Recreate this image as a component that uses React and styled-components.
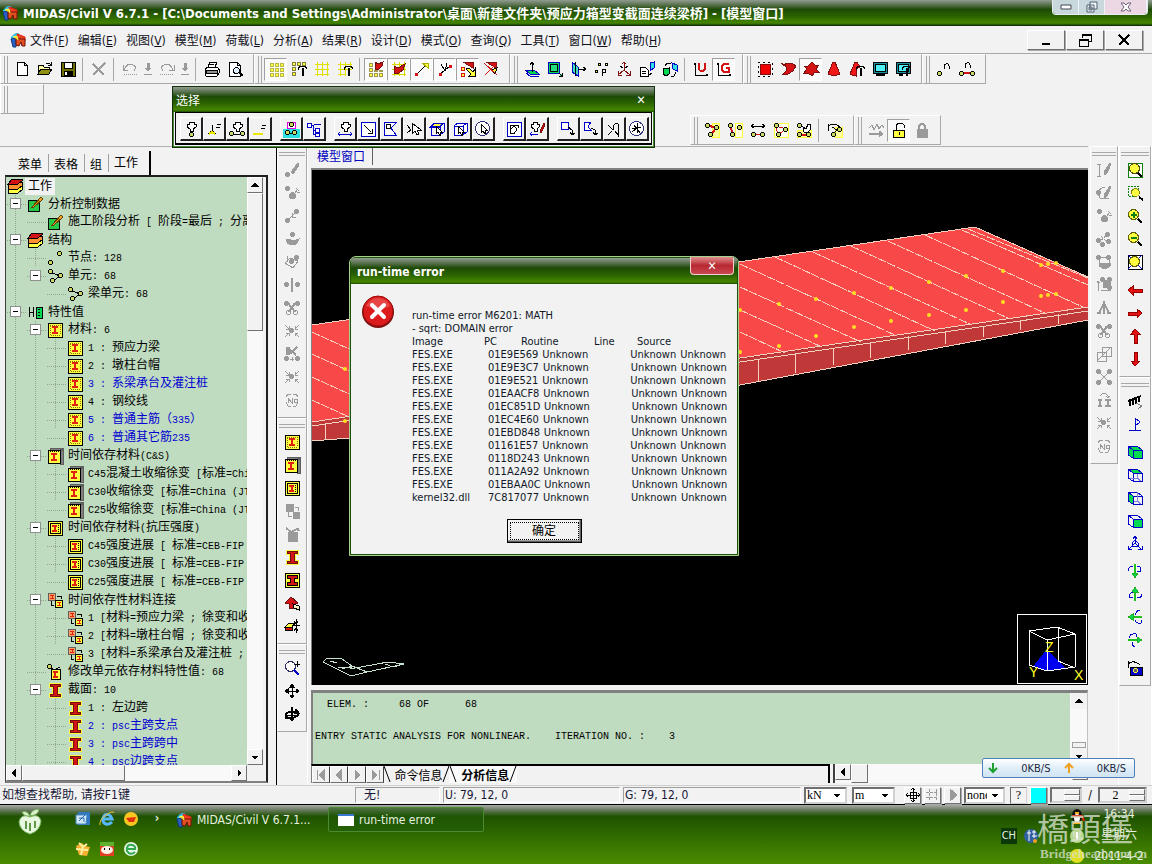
import React, { useState } from "react";
import styled, { createGlobalStyle, css } from "styled-components";

const GlobalStyle = createGlobalStyle`
  * {
    box-sizing: border-box;
  }
  body {
    margin: 0;
    background: #f2f2f2;
    font-family: "DejaVu Sans Condensed", "Noto Sans CJK SC", sans-serif;
    font-size: 12px;
    color: #000;
  }
  button,
  select,
  input {
    font: inherit;
    color: inherit;
    margin: 0;
    padding: 0;
    border: 0;
    background: none;
    border-radius: 0;
  }
`;

/* ---------- icons ---------- */

const K = "#000";
const B = "#0000c8";
const G = "#00d850";
const R = "#d41414";
const Y = "#ffff40";
const C = "#30e0e0";
const W = "#fff";
const D = "#9a9a9a";
const O = "#c8d860";

// half pixel centre keeps the small circles round on the pixel grid
const dot = (x, y, r = 2) =>
  `M${x + 0.5 - r} ${y + 0.5}a${r} ${r} 0 1 0 ${2 * r} 0a${r} ${r} 0 1 0 ${-2 * r} 0z`;
const node = (x, y) => [dot(x, y), K, O];
const gray = (x, y) => [dot(x, y, 2), D, D];

const hand = "M7 10V8L4 6V3h2V1h5v2h2v3l-3 2v2z";
const cursor = "M6 2v11l3-3 2 4 2-1-2-4h4z";
const hammer = ["M7 9V7l3-2h4l2 3M12 7v8M11 7v8", K];
const cubeLines = "M2 5l4-3h9v9l-4 3H2zM2 5h9v9M11 5l4-3";
const layers = [
  ["M1 15v-4l4-3h10v4l-4 3H1z", K, Y],
  ["M1 10V7l4-3h10v4l-4 3H1z", K, "#ff9030"],
  ["M1 6l4-5h10v2l-4 3z", K, R]
];
const beamBox = [
  ["M1 1h14v14H1z", K, Y],
  ["M3 3h10v10H3z", "#807000", null, 1, "1 1"],
  ["M5 5h6M5 11h6M8 5v6", "#e02010", null, 2]
];
const beamCreep = [
  ["M13 1h3v15h-3zM3 0h13v2H3z", "#606060", "#808080"],
  ["M1 2h12v13H1z", K, Y],
  ["M3 3h10v11", K, null, 1, "1 1"],
  ["M4 6h6M4 12h6M7 6v6", "#e02010", null, 2]
];
const beamStrength = [
  ["M1 1h14v14H1z", K, Y],
  ["M3 3h10v10H3z", K],
  ["M5 6h5M5 11h5M8 6v5", "#e02010", null, 2],
  ["M11 3v10", K, null, 1, "1 1"]
];
const section = [
  ["M2 1h12v4h-3v6h3v4H2v-4h3V5H2z", Y, R],
  ["M3 2h10v2h-3v8h3v2H3v-2h3V4H3z", "#701010", R]
];

const icons = {
  app: [
    ["M1 6q4-6 8-4l-2 6z", "#30b8e8", "#30c8f0"],
    ["M7 2l8 3v4l-7-1z", "#e02010", "#f04020"],
    ["M1 7l5-1v9H3z", "#103880", "#2860c8"],
    ["M6 7h9v7h-3l-1-4-2 4-3-1z", "#701008", "#e05020"],
    ["M3 5l4-1 1 4", Y, "#f0d020"]
  ],
  newFile: [["M3 1h7l3 3v10H3zM10 1v3h3", K, W]],
  open: [
    ["M1 13V4h5l1 2h5v2", K, "#ffffa0"],
    ["M1 13l3-5h11l-3 5z", K, "#909010"],
    ["M9 3q3-2 5 1M14 1v3h-3", K]
  ],
  save: [
    ["M1 1h14v14H1z", K, "#707000"],
    ["M4 1h8v6H4z", K, W],
    ["M4 10h8v5H4z", K, K],
    ["M6 11v3", W, null, 2]
  ],
  remove: [["M2 3l11 11M14 2L2 14", D, null, 2]],
  undo: [["M1 4v5h5M2 9q2-6 7-6 7 2 3 7", D], ["M2 13h13", D, null, 1, "1 1"]],
  redo: [["M15 4v5h-5M14 9q-2-6-7-6-7 2-3 7", D], ["M1 13h13", D, null, 1, "1 1"]],
  down: [["M7 2h2v4H7zM5 7h6l-3 3z", D, D], ["M4 13h8", D]],
  print: [
    ["M4 6l2-5h7l-2 5M1 8l3-2h9l2 2v4l-2 3H2l-1-3z", K, W],
    ["M2 9h11v3H2zM6 3h4M15 8l-2 2", K, "#909090"]
  ],
  preview: [
    ["M2 1h8l3 3v11H2zM10 1v3h3", K, W],
    [dot(9, 9, 3), K, "#e0f0ff"],
    ["M12 11l4 4", K, null, 2]
  ],
  gridDots: [["M2 2h3v3H2zM7 2h3v3H7zM12 2h3v3h-3zM2 7h3v3H2zM7 7h3v3H7zM12 7h3v3h-3zM2 12h3v3H2zM7 12h3v3H7zM12 12h3v3h-3z", "#b8b848", Y]],
  gridDotsSet: [["M1 1h3v3H1zM6 1h3v3H6zM11 1h3v3h-3zM1 6h3v3H1zM1 11h3v3H1z", "#808040", Y], hammer],
  gridLines: [["M1 3h14M1 8h14M1 13h14M3 1v14M8 1v14M13 1v14", "#e0e000", null, 1]],
  gridLinesSet: [["M1 3h14M1 8h14M1 13h8M3 1v14M8 1v14M13 1v6", "#e0e000"], hammer],
  snapGrid: [["M1 2h3v3H1zM1 7h3v3H1zM6 9h3v1H6zM1 12h3v3H1zM6 12h3v3H6zM11 12h3v3h-3zM11 9h3v1h-3z", "#a09850", Y], ["M7 8V1l3 2 5-2-1 4-4 4z", "#701010", R]],
  snapLine: [["M1 3h14M1 8h14M1 13h14M3 1v14M8 1v14M13 1v14", "#d8d800", Y], ["M3 12V5l4 2 7-4-2 6-4 3z", "#701010", R]],
  snapNode: [["M3 13l8-8", K], ["M8 2h6v5z", "#b0b000", Y], ["M1 12h2v2H1z", R, R]],
  snapElem: [["M3 13l10-8M4 3l4 7 2-8", K], ["M2 12h2v2H2zM12 4h2v2h-2z", R, R]],
  snapAll: [["M1 6h3v3H1zM1 12h3v3H1z", R, Y], ["M3 1h10v6z", "#801010", R], ["M6 8l5 5-2 2h6V8l-2 3-4-4z", K, Y]],
  snapNone: [["M3 1h10v6z", "#801010", R], ["M8 9l4 4 2-6z", K, Y], ["M1 2l13 12M14 2L2 14", R]],
  workPlane: [["M1 9h9l5 4H6z", B, G], ["M8 11V1M6 4l2-3 2 3", K], ["M2 12l4 3h9", B]],
  workXY: [["M1 1h11v11H1z", B, G], ["M3 3h7v7H3zM12 12l3 3M15 12v3h-3", K, "#20e080"]],
  workXZ: [["M2 1l6 5v9l-6-4z", B, "#40e0c0"], ["M8 8h8M13 6l3 2-3 2M5 1v14", K]],
  points: [["M5 2h2v2H5zM12 2h2v2h-2zM2 9h2v2H2z", K, Y], ["M9 8h3v3H9v4V8z", K]],
  axes: [["M8 9V1M8 9l-6 5M8 9l6 5M6 3l2-2 2 2M2 10v4h4M14 10v4h-4", "#801010"], ["M4 5l3 2M12 5L9 7", K]],
  calcSheet: [["M1 6h5l3 3v6H1zM3 10h4M3 12h4", K, W], ["M11 2l4-1v6l-4 3z", B, C], ["M10 14l3-2", K]],
  rotatePlane: [["M1 8l6-1v6l-3 2-3-2z", K, G], ["M10 2l5 2v6l-4-2z", B, C], ["M3 5l2-3h4M14 11l-2 4H9", K]],
  ucs: [["M2 2v12h13M1 4l1-2 1 2M13 13l2 1-2 1", K], ["M6 2v5q0 3 3 3t3-3V2", R, null, 2]],
  gcs: [["M2 2v12h13M1 4l1-2 1 2M13 13l2 1-2 1", K], ["M13 3H8L6 5v4l2 2h5V7h-3", R, null, 2]],
  hidden: [["M3 3h10v10H3z", "#801010", "#f00000"], ["M1 1h14v14H1z", K, null, 1, "2 3"]],
  shrink: [["M1 2l4 2V2h7l4 3-3 5-5 3H3l3-3V6z", "#801010", R]],
  perspective: [["M1 5h4l4-4 3 3h4l-3 4 3 3h-4l-3 4-4-3H1l3-4z", "#801010", R]],
  render: [["M8 1h1l5 12q-6 3-12 0L7 1z", "#801010", "#f01818"]],
  renderSet: [["M7 1h1l3 5-4 2v7q-3 0-6-2L6 1z", "#801010", "#f01818"], hammer],
  display: [["M1 1h14v11H1z", K, "#1890a0"], ["M3 3h10v7H3z", K, "#50f0f8"], ["M4 14h9", K, null, 2]],
  displaySet: [["M1 1h14v11H1z", K, "#1890a0"], ["M3 3h10v7H3z", K, "#50f0f8"], ["M4 14h4", K, null, 2], hammer],
  nodeNo: [node(3, 12), ["M8 3v5M8 4q4-3 5 1v3", K]],
  elemNo: [["M3 12h10", R, null, 2], node(2, 12), node(13, 12), ["M6 2v5M6 3q4-3 5 1v3", K]],
  selSingle: [[hand, K, W], node(8, 13)],
  selNew: [["M2 13l4-3v-6M6 10l4 3", K], ["M3 13l3-2 3 2", "#e8e800", null, 2], ["M11 3h4M10 6h4", K]],
  selElem: [[hand, K, W], ["M3 13h10", K], node(2, 12), node(13, 12)],
  selLine: [["M1 13h10", "#e8e800", null, 2], ["M10 4h4M9 7h4", K]],
  selGroup: [["M0 8h16v8H0z", C, C], ["M4 1h8v6H4z", "#e000e0", W], node(8, 3), node(4, 11), node(11, 11), ["M6 12h4", K]],
  selTree: [["M1 2h4v4H1zM9 7h4v4H9zM9 12h4v3H9z", B, W], ["M5 4h2v9h2M7 9h2M8 3h7", B]],
  selIdentity: [[hand, K, W], ["M1 13h14M3 11l-2 2 2 2M13 11l2 2-2 2", B]],
  selWindow: [["M1 1h14v14H1z", B, W], ["M4 4l7 7M12 8v4H8", K]],
  selPolygon: [["M14 1H1v13h12l-5-7z", B, W], ["M3 3h4v4H3z", K]],
  selCross: [[cursor, K, W], ["M1 4l4 5M1 12l4-3", K]],
  selPlane: [["M1 6l5-4h9l-4 4z", B, Y], [cubeLines, B], ["M7 5v8l2-2 2 4 1-1-1-3h2z", K, W]],
  selVolume: [[cubeLines, B, W], ["M6 5v8l2-2 2 4 1-1-1-3h2z", K, W]],
  selPointer: [[dot(7, 7, 7), "#303080", W], ["M6 3v9l2-2 2 3 1-1-1-3h2z", K, W]],
  selPrev: [["M1 1h14v14H1z", B, W], ["M4 5v7h5M4 12q1-7 5-6 4 3-1 6M4 4h8v3", K]],
  selRecent: [["M5 10V8L2 6V3h2V1h4v2h2v3L8 8v2z", K, W], ["M15 2l-4 8 1 2 4-8z", "#801010", R], ["M1 13h8M3 11l-2 2 2 2", B]],
  unWindow: [["M1 1h7v7H1z", B, W], ["M8 6l4 3v5M10 11l2 3 3-2", K]],
  unPolygon: [["M8 1H1v8h7L5 6z", B, W], ["M8 7l4 2v5M10 11l2 3 3-2", K]],
  unCross: [["M7 9V5l3-3 2 1v11l-3-4M2 4l5 5M2 14l4-4", K]],
  unAll: [[dot(7, 7, 7), "#303080", W], ["M8 2v10M3 8l9-2M5 4l6 8M3 11l4-3", K]],
  actNode: [["M8 1h7v14H8z", Y, "#ffffa0"], ["M3 3l9 3-5 7", R, null, 2], node(3, 3), node(6, 12), node(12, 5)],
  actElem: [["M8 1h7v14H8z", Y, "#ffffe0"], ["M4 3l1 9", R, null, 2], node(3, 3), node(5, 12), node(12, 5)],
  actSwap: [["M1 4h14M4 2L1 4l3 2M12 2l3 2-3 2", K], ["M4 12h8", R], node(3, 12), node(12, 12)],
  actTri: [["M1 1h14v14H1z", Y, "#fffff0"], ["M3 4l10 3-8 6z", R], node(3, 3), node(12, 7), node(5, 12)],
  actHand: [["M1 8h14v7H1z", Y, "#ffffa0"], ["M8 10L7 5l3 2 2-5h2v6l-3 3z", K, W], ["M4 13h7", R, null, 2], node(3, 3), node(3, 12), node(12, 12)],
  actUndo: [["M8 5h7v10H8z", Y, "#ffffa0"], ["M1 2v7M1 5q5-6 12 0M5 5l5 3-5 5", K], node(12, 7), node(6, 12)],
  modal: [["M1 6l3-3 2 5 3-6 2 5 3-4 2 3", D], ["M1 12h12", D, null, 2], ["M11 9l4 3-4 3z", D, D]],
  unlock: [["M2 8h11v7H2z", K, Y], ["M5 8V4l2-3h4l2 2v3M8 10v3", K]],
  lock: [["M3 7h10v8H3z", D, D], ["M5 7V4l2-2h2l2 2v3", D, null, 2]],
  layers,
  pencil: [["M1 4h11v11H1z", K, "#28c848"], ["M5 11L14 1l2 2-9 8-3 1z", "#604000", "#f0a020"]],
  nodes: [node(3, 12), node(12, 3)],
  elems: [["M3 4l10 4-7 5", K], node(3, 3), node(13, 7), node(5, 12)],
  props: [["M2 3v10M6 3v10M2 8h4", K], ["M9 3h6v11H9z", K, G], ["M11 5h2M11 8h2M11 11h2", K]],
  beamBox,
  beamCreep,
  beamStrength,
  beamLink: [["M1 1h7v7H1z", "#606060", "#ffa060"], ["M8 8h7v7H8z", K, Y], ["M10 4h4v3M4 9v4h3", K], ["M3 3h4M3 6h4M5 3v3M10 10h4M10 13h4M12 10v3", "#e02010"]],
  modify: [["M4 5h9v10H4z", K, Y], ["M2 2l5 4 6-3", K], node(2, 2), ["M6 8h5M6 13h5M8 8v5", "#e02010", null, 2]],
  section,
  gNode: [["M14 1l-7 9 2 2 6-9z", D, D], gray(3, 12)],
  gBomb: [[dot(8, 10, 3), D, D], gray(3, 3), ["M11 8l3-4M12 3l3 3M13 7h3", D]],
  gMove: [["M3 13L13 3M8 5v4h4", D], gray(3, 12), gray(12, 3)],
  gTurn: [["M2 8q1 6 6 6t7-6l-3 1M2 8h5q-1 3 4 2", D, D], gray(8, 3)],
  gProject: [["M1 9l5-5 8 3-5 7zM3 2v6M6 9l6-6", D], gray(7, 7), gray(12, 3)],
  gMirror: [["M8 1v14", D, null, 2], gray(2, 7), gray(13, 7)],
  gCut: [["M4 3l7 9M11 3l-6 9", D, null, 2], [dot(4, 12), D], [dot(11, 12), D], gray(2, 3), gray(13, 3)],
  gMerge: [["M1 2l4 4M15 2l-4 4M1 14l4-4M15 14l-4-4M5 3v3H2M11 3v3h3M5 13v-3H2M11 13v-3h3", D], gray(7, 7)],
  gCompact: [["M3 1v7h2V1M13 1L6 8M5 3l7 6", D, null, 2], gray(2, 12), gray(13, 12), ["M6 13h4M8 11v4", D]],
  gRenum: [["M2 5l2-3h3M14 5l-2-3H9M2 10l2 4h3M14 10l-2 4H9M4 11V6l4 5V6M10 7h3v3h-3z", D]],
  gLine: [["M3 2v12M1 2h4M1 14h4", D], ["M14 1l-6 9v3l3-2 4-9z", D, D]],
  gPen: [["M14 1l-6 9v3l3-2 4-9z", D, D], ["M2 7q4-6 7-4M2 8l2 5h9", D], gray(2, 7)],
  gDiv: [["M2 12L12 3M5 5l7 7", D, null, 1, "3 1"], gray(2, 9), gray(11, 3), gray(12, 10), gray(6, 13)],
  gBox: [["M3 3h10v6M3 3v10", D], ["M3 9h11v3l-3 2H6l-3-3z", D, D], gray(2, 3), gray(12, 3)],
  gScale: [["M7 3h7v7H7z", D, D], ["M2 14V4M1 6l1-2 2 2M5 13h10", D], gray(6, 2), gray(13, 2), gray(13, 10)],
  gTri: [["M8 1v13M8 3L3 13M8 3l5 10M1 13h4M11 13h4", D, null, 2]],
  gSplit: [["M1 6h9v9H1zM6 1h9v9H6zM1 15L15 1", D]],
  gCross: [["M3 3l10 10M13 3L3 13", D], gray(2, 2), gray(13, 2), gray(2, 13), gray(13, 13)],
  gParam: [["M2 8h4M2 14h4M4 8v6M9 8h6M9 14h6M12 8v6", D, null, 2], ["M4 4q4-5 8 0v2M10 4l2 2 2-2", D]],
  gLink: [["M2 1h7v7H2z", D, D], ["M9 9h6v6H9z", D, D], ["M11 4h3v4M4 9v4h4", D]],
  gModify: [["M4 6h9v9H4z", D, D], ["M2 2l5 4 6-3M13 2l2 3", D, null, 2]],
  sectionBox: [["M1 1h14v14H1z", K, Y], ["M3 3h10v3h-3v4h3v3H3v-3h3V6H3z", K, R]],
  house: [["M1 8l6-6 7 6-3 1v4H5V9z", "#701010", R], ["M9 9l6 2v4l-5-2z", K, "#fff0c0"]],
  thick: [["M1 9l4-4h6L8 9z", K, Y], ["M1 9h7v3H1z", K, R], ["M12 1v14M9 7h7M10 3l2 3 2-3M10 13l2-3 2 3", K]],
  zoomDyn: [[dot(6, 6, 5), "#303060", W], ["M10 10l5 5", B, null, 2], ["M11 4h5M13 1v6", K]],
  pan: [["M8 1v14M1 8h14", K, null, 1], ["M6 4l2-3 2 3zM6 12l2 3 2-3zM4 6L1 8l3 2zM12 6l3 2-3 2z", K, K]],
  orbit: [["M2 9q0-3 6-3t6 2q0 2-4 3", K, null, 2], ["M8 1v10", K, null, 2], ["M8 15l-3-4h6zM1 7v5h4zM12 3l3 4h-4z", K, K], ["M4 9h7", K]],
  zoomFit: [["M1 1h14v14H1z", "#108010", W], [dot(7, 6, 5), "#505000", Y], ["M11 11l4 4", K, null, 2]],
  zoomWin: [["M1 1h10v10H1z", "#108010", null, 1, "2 1"], [dot(8, 7, 4), "#808000", Y], ["M12 12l4 3", K, null, 2]],
  zoomIn: [[dot(6, 6, 5), "#606000", Y], ["M11 11l4 4", K, null, 2], ["M4 7h6M7 4v6", "#108010", null, 2]],
  zoomOut: [[dot(6, 6, 5), "#606000", Y], ["M11 11l4 4", K, null, 2], ["M4 7h6", "#108010", null, 2]],
  zoomAuto: [["M1 1h14v14H1z", K, W], ["M1 1l14 14M15 1L1 15", B], [dot(7, 7, 5), "#606000", Y]],
  left: [["M1 8l5-4v3h9v3H6v3z", "#900000", "#e81010"]],
  right: [["M15 8l-5-4v3H1v3h9v3z", "#900000", "#e81010"]],
  up: [["M8 1L4 6h3v9h3V6h3z", "#900000", "#e81010"]],
  dn: [["M8 15l-4-5h3V1h3v9h3z", "#900000", "#e81010"]],
  iso: [["M1 8l13-5M3 8v5M6 7v5M9 6v5M12 5v4", K, null, 2], ["M9 10l6 3-4 3", "#808080"]],
  flag: [["M8 14V2l5 4-5 4M2 14h12", B, null, 1]],
  cubeAll: [["M1 3h9l5 4v8H6l-5-3z", B, G], ["M1 3l5 4h9M6 7v8", B]],
  cubeTop: [["M1 3h9l5 4H6z", B, G], ["M1 3v9l5 3h9V7M6 7v8", B], ["M10 8v4H3M10 12l4 3", "#8080e0"]],
  cubeLeft: [["M1 3l5 4v8l-5-3z", B, G], ["M1 3h9l5 4v8H6M6 7h9", B], ["M10 3v9l4 3M10 12H7", "#8080e0"]],
  cubeFront: [["M6 7h9v8H6z", B, G], ["M1 3h9l5 4M1 3v9l5 3M1 3l5 4", B]],
  viewAxes: [["M8 8V1M8 8l-6 6M8 8l6 6M6 4l2-3 2 3M1 11v3h4M15 11v3h-4M5 8l3-3 3 3v3H5z", B]],
  rotDown: [["M8 1v10", "#20c020", null, 2], ["M5 10l3 5 3-5z", "#20b020", G], ["M1 8q0-5 5-4M10 3q6 1 3 6l-3-1", B]],
  rotUp: [["M8 15V5", "#20c020", null, 2], ["M5 6l3-5 3 5z", "#20b020", G], ["M6 6q-5 2-3 6l3-1M10 12q5 0 5-4", B]],
  rotLeft: [["M15 8H5", "#20c020", null, 2], ["M6 5L1 8l5 3z", "#20b020", G], ["M13 1q-5 1-4 5M8 11q1 4 6 3v-3", B]],
  rotRight: [["M1 8h10", "#20c020", null, 2], ["M10 5l5 3-5 3z", "#20b020", G], ["M2 6q1-5 7-4v3M5 10q0 4 3 5", B]],
  camera: [["M1 1v7M1 4q6-5 12 1", K], ["M3 7h12v8H3z", K, B], [dot(8, 10, 2), Y, "#606060"]],
  fast: [["M8 1v14M1 8h14M5 5h6v6H5zM6 3l2-2 2 2M6 13l2 2 2-2M3 6L1 8l2 2M13 6l2 2-2 2", K, "#f2f2f2"]],
  slow: [["M4 2v12M1 5h12M1 10h12M11 2v12", D, null, 1, "3 1"]],
  play: [["M5 2l7 6-7 6z", D, D]],
  triUp: [["M5 9l3-3 3 3z", K, K]],
  triDown: [["M5 7h6l-3 3z", K, K]],
  triLeft: [["M9 5v6L6 8z", K, K]],
  triRight: [["M7 5v6l3-3z", K, K]],
  first: [["M4 3v10M11 3v10L6 8z", D, D]],
  prev: [["M10 3v10L5 8z", D, D]],
  next: [["M6 3v10l5-5z", D, D]],
  last: [["M12 3v10M5 3v10l5-5z", D, D]],
  minimize: [["M4 12h8", K, null, 2]],
  restore: [["M5 2h9v7h-2M5 2v4M5 3h9M2 7h9v7H2zM2 8h9", K]],
  close: [["M3 3l10 10M13 3L3 13", K, null, 2]]
};

const Svg = styled.svg`
  display: block;
  flex: none;
  width: 16px;
  height: 16px;
  overflow: visible;
`;

const Icon = ({ name, smooth }) => (
  <Svg viewBox="0 0 16 16" shapeRendering={smooth ? "auto" : "crispEdges"} aria-hidden="true">
    {icons[name].map(([d, stroke, fill, width, dash], i) => (
      <path
        key={i}
        d={d}
        stroke={stroke}
        fill={fill || "none"}
        strokeWidth={width || 1}
        strokeDasharray={dash}
      />
    ))}
  </Svg>
);

/* ---------- frame ---------- */

const Screen = styled.div`
  position: relative;
  display: flex;
  flex-direction: column;
  height: 100vh;
  overflow: hidden;
  white-space: nowrap;
`;

const greenBar = css`
  background: linear-gradient(#909c90 0, #58704c 20%, #1d4a06 38%, #2b6300 65%, #458600 92%, #1d4a06 100%);
  color: #fff;
`;

const TitleBar = styled.header`
  ${greenBar}
  display: flex;
  align-items: center;
  gap: 5px;
  height: 26px;
  flex: none;
  padding-left: 2px;
  font-size: 13px;
  font-weight: bold;
  border-bottom: 1px solid #12300a;
`;

const WindowButtons = styled.div`
  position: absolute;
  top: 0;
  right: 4px;
  display: flex;
  border: 1px solid #e8eef0;
  border-top: 0;
  border-radius: 0 0 4px 4px;
  overflow: hidden;
`;

const WindowButton = styled.button`
  display: flex;
  align-items: center;
  justify-content: center;
  width: ${p => (p.$close ? 42 : 26)}px;
  height: 14px;
  background: ${p => (p.$close ? "#ecd8e4" : "#c8d8dc")};
  border-right: 1px solid #eef4f6;
`;

const MenuBar = styled.nav`
  display: flex;
  align-items: center;
  height: 28px;
  flex: none;
  padding: 0 9px 0 10px;
  border-bottom: 1px solid #a8a8a8;
`;

const MenuItem = styled.button`
  padding: 0 5px 0 4px;
  color: #101020;
  u {
    text-underline-offset: 1px;
  }
`;

const MdiButtons = styled.div`
  display: flex;
  gap: 1px;
  margin-left: auto;
`;

const raised = css`
  border: 1px solid;
  border-color: #fff #707070 #707070 #fff;
  box-shadow: 1px 1px 0 #a8a8a8;
  background: #f2f2f2;
`;

const MdiButton = styled.button`
  ${raised}
  display: flex;
  align-items: center;
  justify-content: center;
  width: 38px;
  height: 20px;
`;

const Toolbars = styled.div`
  display: flex;
  flex: none;
  height: 30px;
`;

const Bar = styled.div`
  display: flex;
  align-items: center;
  height: 30px;
  padding-right: 7px;
  border: 1px solid #a8a8a8;
  border-left-color: #fff;
  border-top-color: #fff;
`;

const Grip = styled.span`
  width: 4px;
  height: 27px;
  margin: 0 2px 0 3px;
  border: 1px solid #a8a8a8;
  border-width: 0 1px;
`;

const Sep = styled.span`
  width: 1px;
  height: 23px;
  margin: 0 4px 0 3px;
  background: #a8a8a8;
`;

const Tool = styled.button`
  display: flex;
  align-items: center;
  justify-content: center;
  width: ${p => (p.$narrow ? 14 : 23)}px;
  height: 23px;
  border: 1px solid transparent;
  ${p =>
    p.$pressed &&
    css`
      background: #fafafa;
      border-color: #a0a0a0 #fff #fff #a0a0a0;
    `}
`;

const SecondRow = styled.div`
  display: flex;
  flex: none;
  align-items: flex-start;
  height: 62px;
`;

const EmptyBar = styled(Bar)`
  width: 44px;
  align-self: flex-start;
`;

const LowerBars = styled.div`
  display: flex;
  margin: 31px 0 0 646px;
`;

const Workspace = styled.div`
  display: flex;
  flex: 1;
  min-height: 0;
`;

/* ---------- work tree ---------- */

const SidePanel = styled.aside`
  display: flex;
  flex-direction: column;
  width: 277px;
  flex: none;
  padding: 4px 8px 2px 5px;
  border-top: 1px solid #b0b0b0;
  border-right: 1px solid #000;
`;

const Tabs = styled.div`
  display: flex;
  align-items: center;
  height: 24px;
  padding-left: 8px;
`;

const Tab = styled.button`
  height: ${p => (p.$active ? 24 : 18)}px;
  padding: ${p => (p.$active ? "0 11px 4px 5px" : "0 6px 0 5px")};
  border-right: ${p => (p.$active ? "2px solid #000" : "1px solid #a0a0a0")};
`;

const TreeFrame = styled.div`
  display: grid;
  grid-template-columns: minmax(0, 1fr) 16px;
  grid-template-rows: minmax(0, 1fr) 16px;
  flex: 1;
  min-height: 0;
  border: 2px solid #000;
  border-left-width: 1px;
  border-color: #202020 #202020 #808080 #404040;
  padding-right: 3px;
`;

const Tree = styled.ul`
  margin: 0;
  padding: 0 0 0 1px;
  list-style: none;
  overflow: hidden;
  background: #c0dcc0;
`;

const Row = styled.li`
  display: flex;
  align-items: center;
  height: 18px;
  color: ${p => (p.$blue ? "#0000d0" : "#000")};
`;

const Guide = styled.span`
  align-self: stretch;
  flex: none;
  width: 20px;
  background-image: ${p =>
    [
      p.$line && "linear-gradient(#90a890 50%, transparent 0)",
      p.$branch && "linear-gradient(90deg, #90a890 50%, transparent 0)"
    ]
      .filter(Boolean)
      .join(",") || "none"};
  background-size: ${p => [p.$line && "1px 2px", p.$branch && "2px 1px"].filter(Boolean).join(",")};
  background-position: ${p => [p.$line && "8px 0", p.$branch && "8px 9px"].filter(Boolean).join(",")};
  background-repeat: ${p => [p.$line && "repeat-y", p.$branch && "repeat-x"].filter(Boolean).join(",")};
`;

const Toggle = styled.button`
  display: flex;
  align-items: center;
  justify-content: center;
  width: 11px;
  height: 11px;
  margin: 3px 0 0 3px;
  border: 1px solid #909090;
  background: #fff;
  &::before {
    content: "";
    width: 5px;
    height: 1px;
    background: #000;
  }
`;

const Label = styled.span`
  display: flex;
  align-items: baseline;
  margin-left: 2px;
  padding: 0 3px;
  line-height: 17px;
  white-space: pre;
  background: ${p => (p.$active ? "#f2f2f2" : "none")};
`;

const Mono = styled.span`
  font-family: "Liberation Mono", monospace;
  font-size: 10px;
`;

const treeRows = [
  [0, "layers", "工作"],
  [1, "pencil", "分析控制数据"],
  [2, "pencil", "施工阶段分析 [ 阶段=最后 ; 分离"],
  [1, "layers", "结构"],
  [2, "nodes", "节点: 128"],
  [2, "elems", "单元: 68"],
  [3, "elems", "梁单元: 68"],
  [1, "props", "特性值"],
  [2, "beamBox", "材料: 6"],
  [3, "beamBox", "1 : 预应力梁"],
  [3, "beamBox", "2 : 墩柱台帽"],
  [3, "beamBox", "3 : 系梁承台及灌注桩", true],
  [3, "beamBox", "4 : 钢绞线"],
  [3, "beamBox", "5 : 普通主筋（335）", true],
  [3, "beamBox", "6 : 普通其它筋235", true],
  [2, "beamCreep", "时间依存材料(C&S)"],
  [3, "beamCreep", "C45混凝土收缩徐变 [标准=China"],
  [3, "beamCreep", "C30收缩徐变 [标准=China (JTG"],
  [3, "beamCreep", "C25收缩徐变 [标准=China (JTG"],
  [2, "beamStrength", "时间依存材料(抗压强度)"],
  [3, "beamStrength", "C45强度进展 [ 标准=CEB-FIP"],
  [3, "beamStrength", "C30强度进展 [ 标准=CEB-FIP"],
  [3, "beamStrength", "C25强度进展 [ 标准=CEB-FIP"],
  [2, "beamLink", "时间依存性材料连接"],
  [3, "beamLink", "1 [材料=预应力梁 ; 徐变和收"],
  [3, "beamLink", "2 [材料=墩柱台帽 ; 徐变和收"],
  [3, "beamLink", "3 [材料=系梁承台及灌注桩 ;"],
  [2, "modify", "修改单元依存材料特性值: 68"],
  [2, "section", "截面: 10"],
  [3, "section", "1 : 左边跨"],
  [3, "section", "2 : psc主跨支点", true],
  [3, "section", "3 : psc主跨跨中", true],
  [3, "section", "4 : psc边跨支点", true]
];

// does a later row at this level hang off the same parent?
const continues = (index, level) => {
  for (let i = index + 1; i < treeRows.length; i++) {
    if (treeRows[i][0] === level) return true;
    if (treeRows[i][0] < level) return false;
  }
  return true;
};

const TreeRow = ({ index }) => {
  const [level, icon, text, blue] = treeRows[index];
  const next = treeRows[index + 1];
  const open = level > 0 && next && next[0] > level;
  const slots = [];
  for (let l = 1; l <= level; l++) {
    slots.push(
      <Guide key={l} $line={continues(index, l)} $branch={l === level}>
        {l === level && open && <Toggle aria-label={`折叠 ${text}`} />}
      </Guide>
    );
  }
  return (
    <Row $blue={blue}>
      {slots}
      <Icon name={icon} />
      <Label $active={level === 0}>
        {text.split(/([\x20-\x7e]+)/).map((part, i) => (i % 2 ? <Mono key={i}>{part}</Mono> : part))}
      </Label>
    </Row>
  );
};

const ScrollBar = styled.div`
  display: flex;
  flex-direction: ${p => (p.$vertical ? "column" : "row")};
  min-width: 0;
  min-height: 0;
  background: #f9f9f9;
`;

const ScrollButton = styled.button`
  ${raised}
  display: flex;
  align-items: center;
  justify-content: center;
  flex: none;
  width: 16px;
  height: 16px;
  box-shadow: none;
`;

const Thumb = styled.div`
  ${raised}
  box-shadow: none;
  flex: 0 0 ${p => p.$size};
`;

const Space = styled.span`
  flex: 1;
`;

/* ---------- vertical toolbars ---------- */

const SideBars = styled.div`
  flex: none;
  width: ${p => p.$width}px;
  border-right: 1px solid #fff;
`;

const SideBar = styled.div`
  display: flex;
  flex-direction: column;
  align-items: center;
  padding-bottom: 6px;
  border: 1px solid #a8a8a8;
  border-left-color: #fff;
  border-top-color: #fff;
`;

const SideGrip = styled.span`
  align-self: stretch;
  height: 4px;
  margin: 5px 1px 2px;
  border: 1px solid #a8a8a8;
  border-width: 1px 0;
`;

const Gap = styled.span`
  height: ${p => p.$h}px;
`;

const SideTools = ({ items }) => (
  <SideBar>
    <SideGrip />
    {items.map((name, i) =>
      typeof name === "number" ? (
        <Gap key={i} $h={name} />
      ) : (
        <Tool key={i} aria-label={name}>
          <Icon name={name} />
        </Tool>
      )
    )}
  </SideBar>
);

const leftBars = [
  ["gNode", "gBomb", "gMove", "gTurn", "gProject", "gMirror", "gCut", "gMerge", "gCompact", "gMerge", "gRenum"],
  ["beamBox", "beamCreep", "beamStrength", "gLink", "gModify", "section", "sectionBox", "house", "thick"],
  ["zoomDyn", "pan", "orbit"]
];
const editBar = ["gLine", "gPen", "gBomb", "gDiv", "gBox", "gScale", "gTri", "gCut", "gSplit", "gCross", "gParam", "gMerge", "gRenum"];
const viewBars = [
  ["zoomFit", "zoomWin", "zoomIn", "zoomOut", "zoomAuto", 5, "left", "right", "up", "dn"],
  ["iso", "flag", 4, "cubeAll", "cubeTop", "cubeLeft", "cubeFront", "viewAxes", 5, "rotDown", "rotUp", "rotLeft", "rotRight", 5, "camera"]
];

/* ---------- model window ---------- */

const Center = styled.main`
  display: flex;
  flex-direction: column;
  flex: 1;
  min-width: 0;
  padding: 0 2px 2px 3px;
`;

const WindowTabs = styled.div`
  display: flex;
  height: 22px;
  flex: none;
  border-top: 1px solid #b0b0b0;
`;

const WindowTab = styled.button`
  height: 18px;
  padding: 0 7px 3px 6px;
  color: #0000c0;
  border-right: 1px solid #606060;
`;

const View = styled.div`
  flex: 1;
  min-height: 0;
  border: 2px solid #808080;
  border-left-width: 1px;
  border-right: 0;
  border-bottom: 0;
  background: #000;
  overflow: hidden;
  svg {
    display: block;
    width: 100%;
    height: 100%;
  }
`;

const deckLines = [
  "M925 235L1085 308", "M888 241L1047 314", "M851 246L1010 319", "M813 252L972 325",
  "M775 257L935 331", "M740 264L897 336", "M740 287L861 342", "M740 310L822 347", "M740 332L785 353",
  "M962 230L1088 285", "M968 229L1088 278",
  "M312 332L349 349", "M312 354L349 371", "M312 377L349 394", "M312 400L349 417"
];
const sideLines = [
  [758, 360, 381], [795, 354, 373], [833, 348, 365], [870, 342, 358], [908, 336, 350],
  [945, 331, 344], [983, 326, 337], [1020, 320, 330], [1058, 314, 324], [325, 424, 440]
];
const deckDots = [
  [740, 310], [779, 304], [816, 299], [854, 293], [891, 288], [929, 282], [966, 276], [1003, 271], [1041, 265], [1048, 264], [1056, 263],
  [740, 352], [779, 346], [816, 336], [854, 327], [891, 321], [929, 315], [966, 310], [1003, 302], [1041, 296], [1048, 295], [1056, 294],
  [345, 369], [345, 421]
];

const Model = () => (
  <svg viewBox="312 170 776 515" preserveAspectRatio="xMaxYMax meet" role="img" aria-label="模型">
    <path d="M312 325L975 227 1088 277V307L312 422z" fill="#f84848" />
    <path d="M312 422L1088 307V320L740 385 349 438 312 441z" fill="#c03838" />
    <g stroke="#f4d0c0" fill="none" shapeRendering="crispEdges">
      <path d="M312 325L975 227 1088 277M312 422L740 358 1088 307M312 426L740 362 1088 311M312 441L349 438 740 385 1088 320" />
      {deckLines.map(d => (
        <path key={d} d={d} strokeDasharray="9 1" />
      ))}
      {sideLines.map(([x, y1, y2]) => (
        <path key={x} d={`M${x} ${y1}V${y2}`} />
      ))}
    </g>
    {deckDots.map(([x, y]) => (
      <circle key={`${x}-${y}`} cx={x} cy={y} r="2" fill="#ffe020" />
    ))}
    <g stroke="#c8e0d0" fill="none" shapeRendering="crispEdges">
      <path d="M323 662L327 658 342 659 352 666 367 672 404 664 388 662 350 669M323 662L351 676 367 672M330 661L337 663M338 667h14M385 664l8 3 11-3M352 666l-10 3" />
    </g>
    <g fill="none" stroke="#fff" shapeRendering="crispEdges">
      <path d="M1017.5 614.5h69v69h-69z" />
      <path d="M1047 650l-13 16 13 5 18-3z" fill="#0000f0" stroke="#0000f0" />
      <path d="M1029 631l28-4 18 7-28 6zM1029 631v34l18 6 28-4v-33M1047 640v31M1058 627v34l17 7" />
    </g>
    <g fill="#ffff20" fontFamily="Liberation Sans, sans-serif" fontSize="14">
      <text x="1045" y="652">Z</text>
      <text x="1029" y="677">Y</text>
      <text x="1074" y="680">X</text>
    </g>
  </svg>
);

const Output = styled.section`
  flex: none;
  display: grid;
  grid-template-columns: minmax(0, 1fr) 17px;
  margin-top: 5px;
  border-top: 3px solid #808080;
  border-left: 2px solid #808080;
  border-right: 1px solid #c0c0c0;
`;

const Log = styled.pre`
  margin: 0;
  height: 71px;
  padding: 4px 2px;
  background: #c0dcc0;
  font-family: "Liberation Mono", monospace;
  font-size: 10px;
  line-height: 16px;
`;

const LogScroll = styled(ScrollBar)`
  align-items: center;
  button {
    border-color: transparent;
  }
`;

const SmallThumb = styled.div`
  width: 14px;
  height: 6px;
  border: 1px solid #a0a0a0;
  background: #f2f2f2;
`;

const OutputTabs = styled.div`
  display: flex;
  flex: none;
  height: 19px;
`;

const SheetArea = styled.div`
  display: flex;
  flex: 0 1 519px;
  border-top: 2px solid #000;
  border-right: 2px solid #000;
  border-left: 1px solid #808080;
`;

const SheetNav = styled(ScrollButton)`
  width: 18px;
  height: 17px;
  border-right-color: #404040;
`;

const SheetTab = styled.button`
  display: flex;
  align-items: center;
  margin-left: -1px;
  font-weight: ${p => (p.$active ? "bold" : "normal")};
  background: ${p => (p.$active ? "#fafafa" : "none")};
  svg {
    width: 8px;
    height: 17px;
  }
`;

const Sheet = ({ children, active }) => (
  <SheetTab $active={active}>
    <svg viewBox="0 0 8 17" aria-hidden="true">
      <path d="M1 0l6 16" stroke="#000" />
    </svg>
    &nbsp;{children}
    <svg viewBox="0 0 8 17" aria-hidden="true">
      <path d="M7 0L1 16" stroke="#000" />
    </svg>
  </SheetTab>
);

const SheetScroll = styled(ScrollBar)`
  flex: 1;
  margin-left: 3px;
  border-left: 2px solid #404040;
`;

/* ---------- status bar ---------- */

const StatusBar = styled.footer`
  display: flex;
  align-items: center;
  flex: none;
  height: 20px;
  padding-right: 5px;
  border-top: 1px solid #d0d0d0;
  border-bottom: 1px solid #000;
`;

const Cell = styled.span`
  flex: ${p => (p.$grow ? `0 1 ${p.$w}px` : `0 0 ${p.$w}px`)};
  height: 16px;
  margin-right: 3px;
  padding-left: ${p => p.$pad || 1}px;
  line-height: 15px;
  border: 1px solid;
  border-color: ${p => (p.$plain ? "transparent" : "#a0a0a0 #fff #fff #a0a0a0")};
  color: #181838;
`;

const Combo = styled.span`
  display: flex;
  align-items: center;
  flex: none;
  width: ${p => p.$w}px;
  height: 17px;
  margin-right: 5px;
  border: 2px solid;
  border-color: #707070 #d0d0d0 #d0d0d0 #707070;
  background: #fff;
  select {
    flex: 1;
    min-width: 0;
    padding-left: 1px;
    appearance: none;
    font-family: "Liberation Serif", serif;
    font-size: 12px;
  }
`;

const Picker = ({ label, value, width }) => (
  <Combo $w={width}>
    <select aria-label={label} defaultValue={value}>
      <option>{value}</option>
    </select>
    <Icon name="triDown" />
  </Combo>
);

const StatusButton = styled.button`
  ${raised}
  display: flex;
  align-items: center;
  justify-content: center;
  width: 17px;
  height: 17px;
  margin-right: 3px;
  background: ${p => p.$color || "#f2f2f2"};
`;

const HelpButton = styled(StatusButton)`
  border-color: #707070 #d0d0d0 #d0d0d0 #707070;
  box-shadow: none;
  font-family: "Liberation Serif", serif;
`;

const Spinner = styled.span`
  display: flex;
  align-items: center;
  width: ${p => p.$w}px;
  height: 16px;
  border: 2px solid;
  border-color: #707070 #d0d0d0 #d0d0d0 #707070;
  input {
    flex: 1;
    min-width: 0;
    padding-left: 2px;
    text-align: center;
    font-family: "Liberation Serif", serif;
    outline: 0;
  }
`;

const SpinButtons = styled.span`
  display: flex;
  flex-direction: column;
  button {
    ${raised}
    box-shadow: none;
    width: 16px;
    height: 6px;
  }
`;

const Slash = styled.span`
  width: 16px;
  text-align: center;
`;

const Spin = ({ label, value, width }) => (
  <Spinner $w={width}>
    <input aria-label={label} defaultValue={value} />
    <SpinButtons>
      <button aria-label={`${label} +`} />
      <button aria-label={`${label} -`} />
    </SpinButtons>
  </Spinner>
);

/* ---------- taskbar ---------- */

const TaskBar = styled.footer`
  display: flex;
  flex: none;
  height: 59px;
  padding: 2px 5px 0 18px;
  background: linear-gradient(#a8aca8 0, #6c7c64 8%, #1f5200 19%, #2c6600 45%, #4a8c00 100%);
  color: #e8f0e0;
`;

const StartButton = styled.button`
  width: 26px;
  height: 28px;
  svg {
    display: block;
    width: 26px;
    height: 28px;
  }
`;

const QuickLaunch = styled.div`
  display: grid;
  grid-template-columns: repeat(3, 24px);
  grid-template-rows: 24px 36px;
  align-items: center;
  margin-left: 27px;
  button {
    width: 24px;
    height: 24px;
  }
  svg {
    margin: 0 4px;
  }
`;

const More = styled.button`
  width: 20px;
  height: 22px;
  margin-left: 4px;
  font-weight: bold;
  font-size: 12px;
`;

const Task = styled.button`
  display: flex;
  align-items: center;
  gap: 5px;
  width: ${p => p.$w}px;
  height: 25px;
  padding-left: 9px;
  text-align: left;
  ${p =>
    p.$active &&
    css`
      border: 1px solid #4a8a30;
      border-radius: 2px;
      background: rgba(30, 90, 10, 0.5);
    `}
`;

const Tray = styled.div`
  display: flex;
  align-items: center;
  gap: 6px;
  margin-left: auto;
`;

const Lang = styled.span`
  padding: 1px;
  background: #0c3808;
  line-height: 14px;
  font-size: 11px;
`;

const TrayIcons = styled.div`
  display: flex;
  flex-direction: column;
  gap: 4px;
  margin-left: 24px;
`;

const Clock = styled.div`
  display: flex;
  flex-direction: column;
  align-items: center;
  width: 56px;
  line-height: 21px;
`;

const Watermark = styled.div`
  position: absolute;
  right: 5px;
  bottom: 3px;
  display: flex;
  flex-direction: column;
  align-items: flex-end;
  color: rgba(215, 225, 205, 0.8);
  pointer-events: none;
  span {
    margin-right: 14px;
    font-family: "Noto Sans CJK TC", sans-serif;
    font-size: 32px;
    line-height: 38px;
  }
  b {
    font-family: "Liberation Serif", serif;
    font-size: 13px;
    line-height: 15px;
  }
`;

const Ball = ({ color, children }) => (
  <Svg viewBox="0 0 16 16" aria-hidden="true">
    <circle cx="8" cy="8" r="7" fill={color} />
    {children}
  </Svg>
);

/* ---------- floating windows ---------- */

const Palette = styled.section`
  position: absolute;
  top: 86px;
  left: 172px;
  border: 1px solid #12300a;
  background: #f2f2f2;
  box-shadow: inset 0 0 0 1px #4a8a30;
`;

const PaletteTitle = styled.div`
  ${greenBar}
  display: flex;
  align-items: center;
  justify-content: space-between;
  height: 25px;
  padding: 0 5px 0 3px;
`;

const PaletteClose = styled.button`
  width: 16px;
  height: 16px;
  line-height: 14px;
  font-size: 12px;
  font-weight: bold;
`;

const PaletteTools = styled.div`
  display: flex;
  gap: 8px;
  margin: 0 2px 2px;
  padding: 4px 2px 2px 4px;
  border: 1px solid #000;
  border-bottom-width: 2px;
`;

const ToolRun = styled.div`
  display: flex;
`;

const RaisedTool = styled(Tool)`
  height: 24px;
  border-width: 1px 2px 2px 1px;
  border-color: #fff #202020 #202020 #fff;
`;

const Dialog = styled.div`
  position: absolute;
  top: 256px;
  left: 349px;
  width: 390px;
  padding: 1px;
  border: 1px solid #a8d090;
  border-radius: 7px 7px 0 0;
  background: #1d5208;
  overflow: hidden;
  font-size: 11px;
`;

const DialogTitle = styled.h1`
  ${greenBar}
  display: flex;
  align-items: center;
  height: 26px;
  margin: 0;
  padding: 2px 0 0 6px;
  font-size: 12px;
`;

const DialogClose = styled.button`
  position: absolute;
  top: 0;
  right: 4px;
  width: 44px;
  height: 18px;
  border: 1px solid #f0d0d0;
  border-top: 0;
  border-radius: 0 0 4px 4px;
  background: linear-gradient(#e09090, #b82830 50%, #c84850);
  color: #fff;
  font-size: 12px;
  font-weight: bold;
  line-height: 14px;
`;

const DialogBody = styled.div`
  display: grid;
  grid-template-columns: 51px minmax(0, 1fr);
  padding: 10px 10px 11px;
  background: #f2f2f2;
`;

const ErrorIcon = styled.svg`
  width: 34px;
  height: 34px;
`;

const Message = styled.div`
  padding-top: 15px;
  line-height: 13px;
  color: #101828;
  table,
  thead,
  tbody {
    display: block;
  }
  tr {
    display: flex;
  }
  th,
  td {
    padding: 0;
    font-weight: normal;
    text-align: left;
  }
`;

const Col = styled.td`
  min-width: ${p => p.$w || 0}px;
  margin-right: ${p => p.$gap || 0}px;
`;

const Confirm = styled.button`
  ${raised}
  grid-column: 1 / -1;
  justify-self: center;
  width: 75px;
  height: 24px;
  margin-top: 15px;
  padding: 2px;
  border: 1px solid #000;
  box-shadow: inset -1px -1px 0 #606060, inset -2px -2px 0 #a0a0a0;
  span {
    display: block;
    border: 1px dotted #000;
    line-height: 16px;
    font-size: 12px;
  }
`;

const frames = [
  ["FES.EXE", "01E9E569"],
  ["FES.EXE", "01E9E3C7"],
  ["FES.EXE", "01E9E521"],
  ["FES.EXE", "01EAACF8"],
  ["FES.EXE", "01EC851D"],
  ["FES.EXE", "01EC4E60"],
  ["FES.EXE", "01EBD848"],
  ["FES.EXE", "01161E57"],
  ["FES.EXE", "0118D243"],
  ["FES.EXE", "011A2A92"],
  ["FES.EXE", "01EBAA0C"],
  ["kernel32.dll", "7C817077"]
];

const ErrorDialog = ({ onClose }) => (
  <Dialog role="dialog" aria-label="run-time error">
    <DialogTitle>run-time error</DialogTitle>
    <DialogClose aria-label="关闭" onClick={onClose}>
      ✕
    </DialogClose>
    <DialogBody>
      <ErrorIcon viewBox="0 0 34 34" aria-hidden="true">
        <circle cx="17" cy="18" r="16" fill="#801010" />
        <circle cx="17" cy="17" r="15" fill="#dc1c1c" stroke="#a01010" />
        <path d="M5 12Q10 3 18 4 27 5 29 12 20 18 5 12z" fill="#f07070" opacity=".5" />
        <path d="M11 11l12 12M23 11L11 23" stroke="#fff" strokeWidth="4" strokeLinecap="round" />
      </ErrorIcon>
      <Message>
        <div>run-time error M6201: MATH</div>
        <div>- sqrt: DOMAIN error</div>
        <table>
          <thead>
            <tr>
              <Col as="th" $w={72}>Image</Col>
              <Col as="th" $w={37}>PC</Col>
              <Col as="th" $w={73}>Routine</Col>
              <Col as="th" $w={43}>Line</Col>
              <Col as="th">Source</Col>
            </tr>
          </thead>
          <tbody>
            {frames.map(([image, pc]) => (
              <tr key={pc}>
                <Col $w={76}>{image}</Col>
                <Col $gap={4}>{pc}</Col>
                <Col $gap={42}>Unknown</Col>
                <Col $gap={4}>Unknown</Col>
                <Col>Unknown</Col>
              </tr>
            ))}
          </tbody>
        </table>
      </Message>
      <Confirm onClick={onClose}>
        <span>确定</span>
      </Confirm>
    </DialogBody>
  </Dialog>
);

const NetMeter = styled.div`
  position: absolute;
  right: 17px;
  bottom: 86px;
  display: flex;
  align-items: center;
  width: 153px;
  height: 20px;
  border: 1px solid #5080b8;
  border-radius: 2px;
  background: linear-gradient(#fff, #e0eef8 50%, #d0e4f4);
  font-size: 11px;
  color: #202840;
  span {
    display: flex;
    flex: 1;
    align-items: center;
    justify-content: space-between;
    padding: 0 8px 0 2px;
  }
`;

/* ---------- page ---------- */

const menus = [
  ["文件", "F"], ["编辑", "E"], ["视图", "V"], ["模型", "M"], ["荷载", "L"], ["分析", "A"], ["结果", "R"],
  ["设计", "D"], ["模式", "O"], ["查询", "Q"], ["工具", "T"], ["窗口", "W"], ["帮助", "H"]
];

// "|" is a separator, a leading "!" marks a pressed button
const topBars = [
  ["newFile", "open", "save", "|", "remove", "|", "undo", "down", "redo", "down", "|", "print", "preview"],
  ["!gridDots", "gridDotsSet", "gridLines", "gridLinesSet", "|", "!snapGrid", "!snapLine", "!snapNode", "!snapElem", "!snapAll", "snapNone"],
  ["workPlane", "workXY", "workXZ", "points", "axes", "calcSheet", "rotatePlane", "|", "ucs", "!gcs"],
  ["hidden", "shrink", "!perspective", "render", "renderSet", "display", "displaySet"],
  ["nodeNo", "elemNo"]
];
const lowerBars = [
  ["actNode", "actElem", "actSwap", "actTri", "actHand", "|", "actUndo"],
  ["modal", "!unlock", "lock"]
];
const paletteRuns = [
  ["selSingle", "selNew", "selElem", "selLine"],
  ["selGroup", "selTree"],
  ["selIdentity", "selWindow", "selPolygon", "selCross", "selPlane", "selVolume", "selPointer"],
  ["selPrev", "selRecent"],
  ["unWindow", "unPolygon", "unCross", "unAll"]
];

const ToolBar = ({ items }) => (
  <Bar>
    <Grip />
    {items.map((item, i) => {
      if (item === "|") return <Sep key={i} />;
      const name = item.replace("!", "");
      return (
        <Tool key={i} aria-label={name} $pressed={item[0] === "!"} $narrow={name === "down"}>
          <Icon name={name} />
        </Tool>
      );
    })}
  </Bar>
);

const App = () => {
  const [dialogOpen, setDialogOpen] = useState(true);

  return (
    <Screen>
      <GlobalStyle />
      <TitleBar>
        <Icon name="app" smooth />
        MIDAS/Civil V 6.7.1 - [C:\Documents and Settings\Administrator\桌面\新建文件夹\预应力箱型变截面连续梁桥] - [模型窗口]
        <WindowButtons>
          <WindowButton aria-label="最小化">
            <svg width="12" height="6" aria-hidden="true">
              <path d="M1 1h10v4H1z" fill="#fff" stroke="#404850" />
            </svg>
          </WindowButton>
          <WindowButton aria-label="还原">
            <svg width="12" height="12" aria-hidden="true">
              <path d="M4 1h7v7H4zM1 4h7v7H1zM3 6h3v3H3z" fill="#f0f4f8" stroke="#506070" />
            </svg>
          </WindowButton>
          <WindowButton aria-label="关闭" $close>
            <svg width="12" height="10" aria-hidden="true">
              <path d="M1 1h3l2 2 2-2h3L8 5l3 4H8L6 7 4 9H1l3-4z" fill="#fff" stroke="#706078" />
            </svg>
          </WindowButton>
        </WindowButtons>
      </TitleBar>

      <MenuBar>
        <Icon name="app" smooth />
        {menus.map(([name, key]) => (
          <MenuItem key={key}>
            {name}(<u>{key}</u>)
          </MenuItem>
        ))}
        <MdiButtons>
          {["minimize", "restore", "close"].map(name => (
            <MdiButton key={name} aria-label={name}>
              <Icon name={name} />
            </MdiButton>
          ))}
        </MdiButtons>
      </MenuBar>

      <Toolbars>
        {topBars.map((items, i) => (
          <ToolBar key={i} items={items} />
        ))}
      </Toolbars>

      <SecondRow>
        <EmptyBar>
          <Grip />
        </EmptyBar>
        <LowerBars>
          {lowerBars.map((items, i) => (
            <ToolBar key={i} items={items} />
          ))}
        </LowerBars>
      </SecondRow>

      <Workspace>
        <SidePanel>
          <Tabs>
            <Tab>菜单</Tab>
            <Tab>表格</Tab>
            <Tab>组</Tab>
            <Tab $active>工作</Tab>
          </Tabs>
          <TreeFrame>
            <Tree>
              {treeRows.map((row, i) => (
                <TreeRow key={i} index={i} />
              ))}
            </Tree>
            <ScrollBar $vertical>
              <ScrollButton aria-label="向上">
                <Icon name="triUp" />
              </ScrollButton>
              <Thumb $size="138px" />
              <Space />
              <ScrollButton aria-label="向下">
                <Icon name="triDown" />
              </ScrollButton>
            </ScrollBar>
            <ScrollBar>
              <ScrollButton aria-label="向左">
                <Icon name="triLeft" />
              </ScrollButton>
              <Thumb $size="103px" />
              <Space />
              <ScrollButton aria-label="向右">
                <Icon name="triRight" />
              </ScrollButton>
            </ScrollBar>
          </TreeFrame>
        </SidePanel>

        <SideBars $width={31}>
          {leftBars.map((items, i) => (
            <SideTools key={i} items={items} />
          ))}
        </SideBars>

        <Center>
          <WindowTabs>
            <WindowTab>模型窗口</WindowTab>
          </WindowTabs>
          <View>
            <Model />
          </View>
          <Output>
            <Log>{"  ELEM. :     68 OF      68\n\nENTRY STATIC ANALYSIS FOR NONLINEAR.    ITERATION NO. :    3"}</Log>
            <LogScroll $vertical>
              <ScrollButton aria-label="向上">
                <Icon name="triUp" />
              </ScrollButton>
              <Space />
              <SmallThumb />
              <ScrollButton aria-label="向下">
                <Icon name="triDown" />
              </ScrollButton>
            </LogScroll>
          </Output>
          <OutputTabs>
            <SheetArea>
              {["first", "prev", "next", "last"].map(name => (
                <SheetNav key={name} aria-label={name}>
                  <Icon name={name} />
                </SheetNav>
              ))}
              <Sheet>命令信息</Sheet>
              <Sheet active>分析信息</Sheet>
            </SheetArea>
            <SheetScroll>
              <ScrollButton aria-label="向左">
                <Icon name="triLeft" />
              </ScrollButton>
              <Thumb $size="17px" />
              <Space />
              <ScrollButton aria-label="向右">
                <Icon name="triRight" />
              </ScrollButton>
            </SheetScroll>
          </OutputTabs>
        </Center>

        <SideBars $width={29}>
          <SideTools items={editBar} />
        </SideBars>
        <SideBars $width={33}>
          {viewBars.map((items, i) => (
            <SideTools key={i} items={items} />
          ))}
        </SideBars>
      </Workspace>

      <StatusBar>
        <Cell $w={352} $plain>
          如想查找帮助, 请按F1键
        </Cell>
        <Cell $w={85} $pad={8}>
          无!
        </Cell>
        <Cell $w={177}>U: 79, 12, 0</Cell>
        <Cell $w={178} $grow>
          G: 79, 12, 0
        </Cell>
        <Picker label="力" value="kN" width={43} />
        <Picker label="长度" value="m" width={43} />
        <Space />
        <StatusButton aria-label="fast">
          <Icon name="fast" />
        </StatusButton>
        <StatusButton aria-label="slow">
          <Icon name="slow" />
        </StatusButton>
        <StatusButton aria-label="play">
          <Icon name="play" />
        </StatusButton>
        <Picker label="过滤" value="none" width={41} />
        <HelpButton aria-label="帮助">?</HelpButton>
        <StatusButton aria-label="颜色" $color="#00ffff" />
        <Spin label="当前" value="" width={32} />
        <Slash>/</Slash>
        <Spin label="总数" value="2" width={49} />
      </StatusBar>

      <TaskBar>
        <StartButton aria-label="开始">
          <svg viewBox="0 0 26 28" aria-hidden="true">
            <path d="M12 9Q9 3 4 5q2 5 8 4Q13 2 21 2q0 6-9 7z" fill="#d8f0c8" stroke="#70a858" />
            <path d="M12 10q9-4 11 4-1 10-11 13Q2 24 1 15q2-9 11-5z" fill="#e8f8e0" stroke="#80b868" />
            <path d="M8 14v8M12 16v8M17 14v7" stroke="#609848" strokeWidth="2" />
          </svg>
        </StartButton>
        <QuickLaunch>
          <button aria-label="桌面">
            <Svg viewBox="0 0 16 16" aria-hidden="true">
              <path d="M3 1h12v13H3z" fill="#3078c0" />
              <path d="M1 4h11l-1 9H1z" fill="#d0e8f8" stroke="#4888c0" />
              <path d="M4 10l6-6M4 7h5v4" stroke="#2868b0" fill="none" />
            </Svg>
          </button>
          <button aria-label="Internet Explorer">
            <Svg viewBox="0 0 16 16" aria-hidden="true">
              <path d="M13 11Q9 15 5 12 2 8 6 4q5-2 7 4H5" stroke="#58b8f8" fill="none" strokeWidth="3" />
              <path d="M1 14Q0 9 7 4t8-2" stroke="#f0c830" fill="none" />
            </Svg>
          </button>
          <button aria-label="浏览器">
            <Ball color="#f8c820">
              <path d="M3 7l10-1-2 5H6z" fill="#e03010" />
            </Ball>
          </button>
          <button aria-label="礼包">
            <Svg viewBox="0 0 16 16" aria-hidden="true">
              <path d="M1 5l6-3 3 3 5 1-3 9-8-1z" fill="#f8b030" />
              <path d="M1 8l12 1M8 5L6 14M4 2l4 4 4-3" stroke="#fff0a0" fill="none" strokeWidth="2" />
            </Svg>
          </button>
          <button aria-label="助手">
            <Svg viewBox="0 0 16 16" aria-hidden="true">
              <path d="M1 1h14v14H1z" fill="#e04020" />
              <path d="M1 1h14v4H1z" fill="#60b030" />
              <ellipse cx="8" cy="9" rx="6" ry="4" fill="#fff0e8" />
              <path d="M5 8h1M10 8h1" stroke="#000" strokeWidth="2" />
            </Svg>
          </button>
          <button aria-label="安全浏览器">
            <Ball color="#e8f8e8">
              <path d="M12 11q-5 4-8-1-1-7 5-6 4 1 3 4H5" stroke="#30a850" fill="none" strokeWidth="2" />
            </Ball>
          </button>
        </QuickLaunch>
        <More>›</More>
        <Task $w={161}>
          <Icon name="app" smooth />
          MIDAS/Civil V 6.7.1...
        </Task>
        <Task $w={156} $active>
          <Svg viewBox="0 0 16 16" aria-hidden="true">
            <path d="M0 2h16v12H0z" fill="#fff" />
            <path d="M0 2h16v2H0z" fill="#3878d0" />
          </Svg>
          run-time error
        </Task>
        <Tray>
          <Lang>CH</Lang>
          <Ball color="#3060a0">
            <path d="M4 5h4M6 2v11M9 4h4M11 2v8M9 8h5" stroke="#fff" />
            <circle cx="12" cy="13" r="2" fill="#f0a020" />
          </Ball>
          <TrayIcons>
            <Svg viewBox="0 0 16 16" aria-hidden="true">
              <ellipse cx="8" cy="8" rx="5" ry="7" fill="#101010" />
              <ellipse cx="8" cy="10" rx="3" ry="4" fill="#fff" />
              <path d="M3 8h10l2 5" stroke="#e02010" strokeWidth="2" fill="none" />
              <path d="M6 5h4M4 15h8" stroke="#f8b020" strokeWidth="2" />
            </Svg>
            <Ball color="#b8d890">
              <path d="M8 4v8" stroke="#fff" strokeWidth="2" />
            </Ball>
            <Ball color="#e0e020" />
          </TrayIcons>
          <Clock>
            <span>16:34</span>
            <span>星期六</span>
            <span>2011-4-2</span>
          </Clock>
        </Tray>
      </TaskBar>

      <Palette>
        <PaletteTitle>
          选择
          <PaletteClose aria-label="关闭">✕</PaletteClose>
        </PaletteTitle>
        <PaletteTools>
          {paletteRuns.map((run, i) => (
            <ToolRun key={i}>
              {run.map(name => (
                <RaisedTool key={name} aria-label={name}>
                  <Icon name={name} />
                </RaisedTool>
              ))}
            </ToolRun>
          ))}
        </PaletteTools>
      </Palette>

      {dialogOpen && <ErrorDialog onClose={() => setDialogOpen(false)} />}

      <NetMeter>
        <span>
          <Svg viewBox="0 0 16 16" aria-hidden="true">
            <path d="M8 3v9M4 8l4 4 4-4" stroke="#20a030" strokeWidth="2" fill="none" />
          </Svg>
          0KB/S
        </span>
        <span>
          <Svg viewBox="0 0 16 16" aria-hidden="true">
            <path d="M8 13V4M4 8l4-4 4 4" stroke="#f0a020" strokeWidth="2" fill="none" />
          </Svg>
          0KB/S
        </span>
      </NetMeter>

      <Watermark>
        <span>橋頭堡</span>
        <b>Bridgehead.com.cn</b>
      </Watermark>
    </Screen>
  );
};

export default App;
